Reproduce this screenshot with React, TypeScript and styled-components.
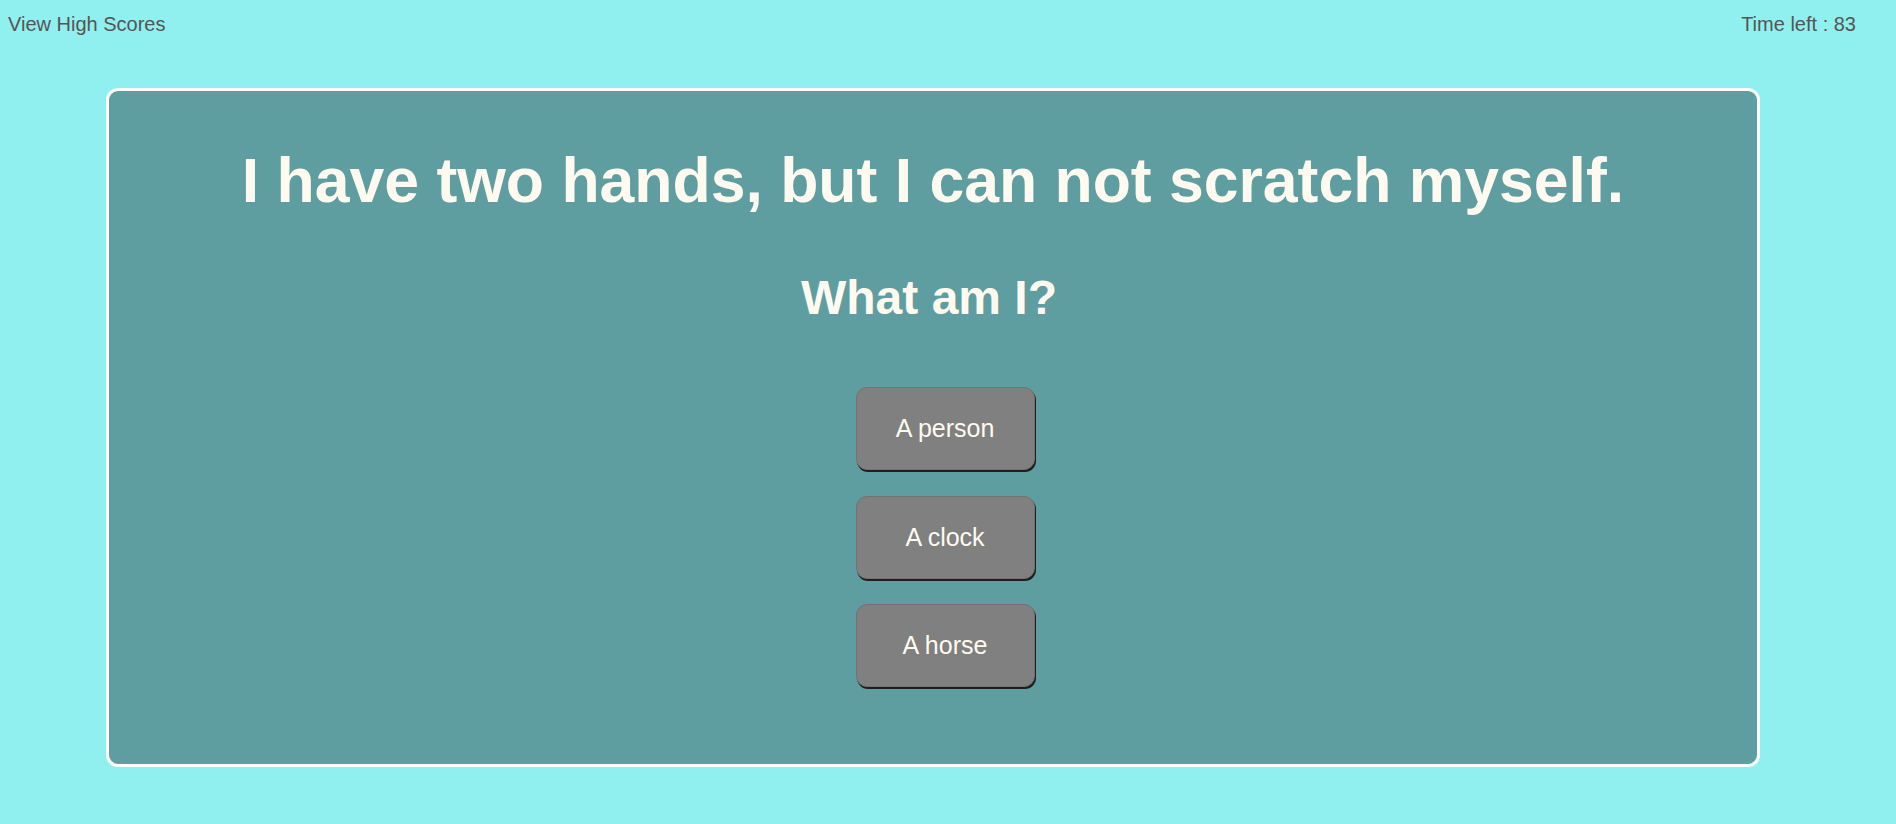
import React from "react";
import styled, { createGlobalStyle } from "styled-components";

const GlobalStyle = createGlobalStyle`
  html, body {
    background: #90f0ef;
  }
  body {
    margin: 8px 23px 8px 8px;
    font-family: "Liberation Sans", Arial, sans-serif;
  }
`;

const Header = styled.header`
  display: flex;
  justify-content: space-between;
  align-items: flex-start;
  padding: 5px 17px 0 0;
  font-size: 20px;
  color: #555;
`;

const HeaderLink = styled.a`
  color: #555;
  text-decoration: none;
  cursor: pointer;
`;

const Timer = styled.div`
  color: #555;
`;

const Card = styled.main`
  margin: 52px 113px 98px 98px;
  background: #5f9ea0;
  border: 3px solid #ffffff;
  border-radius: 12px;
  padding: 53px 0 77px;
  display: flex;
  flex-direction: column;
  align-items: center;
  color: #fffaf0;
`;

const Riddle = styled.h1`
  margin: 0;
  font-size: 62.5px;
  font-weight: bold;
  text-align: center;
`;

const Question = styled.h2`
  margin: 54px 8px 0 0;
  font-size: 48px;
  font-weight: bold;
  text-align: center;
`;

const Choices = styled.div`
  margin-top: 62px;
  padding-left: 24px;
  display: flex;
  flex-direction: column;
  gap: 25.5px;
`;

const Choice = styled.button`
  box-sizing: border-box;
  width: 179px;
  height: 83px;
  background: #808080;
  color: #fffaf0;
  font-family: "Liberation Sans", Arial, sans-serif;
  font-size: 25px;
  border: 1px solid #727272;
  border-radius: 11px;
  box-shadow: 1px 2px 0 #1e1e1e;
  cursor: pointer;
`;

const choices = ["A person", "A clock", "A horse"];

export default function App() {
  return (
    <>
      <GlobalStyle />
      <Header>
        <HeaderLink>View High Scores</HeaderLink>
        <Timer>Time left : 83</Timer>
      </Header>
      <Card>
        <Riddle>I have two hands, but I can not scratch myself.</Riddle>
        <Question>What am I?</Question>
        <Choices>
          {choices.map((c) => (
            <Choice key={c}>{c}</Choice>
          ))}
        </Choices>
      </Card>
    </>
  );
}
